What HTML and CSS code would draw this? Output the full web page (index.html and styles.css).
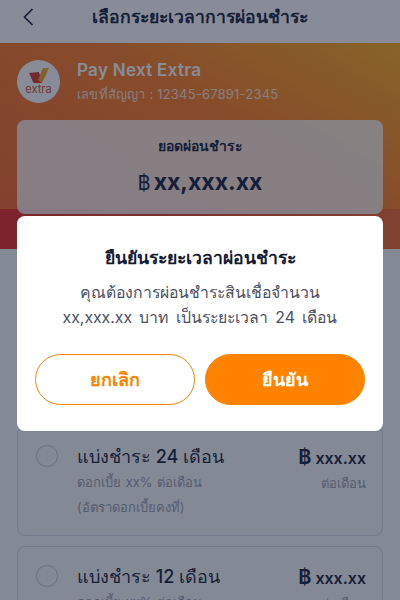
FILE: index.html
```html
<!DOCTYPE html>
<html lang="th">
<head>
<meta charset="utf-8">
<title>เลือกระยะเวลาการผ่อนชำระ</title>
<link rel="stylesheet" href="styles.css">
</head>
<body>
<div class="page">
  <header class="topbar">
    <svg class="back" width="11" height="18" viewBox="0 0 11 18"><path d="M9.5 1 L1.5 9 L9.5 17" fill="none" stroke="#1c2540" stroke-width="1.7"/></svg>
    <h1 class="title">เลือกระยะเวลาการผ่อนชำระ</h1>
  </header>
  <section class="hero">
    <div class="product">
      <div class="logo">
        <svg width="20" height="15" viewBox="0 0 20 15"><path d="M0 5 L10 4 L13 15 L4.500 15 Z" fill="#d8392b"/><path d="M9 12 L14 0 L20 0 L13 15 Z" fill="#f5a623"/></svg>
        <span class="logo-text">extra</span>
      </div>
      <div class="product-info">
        <div class="product-name">Pay Next Extra</div>
        <div class="contract">เลขที่สัญญา : 12345-67891-2345</div>
      </div>
    </div>
    <div class="amount-card">
      <div class="amount-label">ยอดผ่อนชำระ</div>
      <div class="amount"><span class="baht-big">฿</span>xx,xxx.xx</div>
    </div>
  </section>
  <section class="plans">
    <article class="plan">
      <span class="radio"></span>
      <div class="plan-main">
        <div class="plan-title">แบ่งชำระ 24 เดือน</div>
        <div class="plan-sub">ดอกเบี้ย xx% ต่อเดือน</div>
        <div class="plan-sub">(อัตราดอกเบี้ยคงที่)</div>
      </div>
      <div class="plan-side">
        <div class="plan-price"><span class="baht">฿</span>xxx.xx</div>
        <div class="plan-sub">ต่อเดือน</div>
      </div>
    </article>
    <article class="plan">
      <span class="radio"></span>
      <div class="plan-main">
        <div class="plan-title">แบ่งชำระ 12 เดือน</div>
        <div class="plan-sub">ดอกเบี้ย xx% ต่อเดือน</div>
        <div class="plan-sub">(อัตราดอกเบี้ยคงที่)</div>
      </div>
      <div class="plan-side">
        <div class="plan-price"><span class="baht">฿</span>xxx.xx</div>
        <div class="plan-sub">ต่อเดือน</div>
      </div>
    </article>
  </section>
  <div class="overlay">
    <div class="dialog">
      <h2 class="dialog-title">ยืนยันระยะเวลาผ่อนชำระ</h2>
      <p class="dialog-text">คุณต้องการผ่อนชำระสินเชื่อจำนวน<br>xx,xxx.xx บาท เป็นระยะเวลา 24 เดือน</p>
      <div class="actions">
        <button class="btn btn-outline">ยกเลิก</button>
        <button class="btn btn-fill">ยืนยัน</button>
      </div>
    </div>
  </div>
</div>
</body>
</html>
```
FILE: styles.css
```css
* { box-sizing: border-box; }
html, body { margin: 0; padding: 0; }
body { font-family: "Inter", "Noto Sans", "DejaVu Sans", sans-serif; color: #1c2540; }
.page { position: relative; width: 400px; height: 600px; overflow: hidden; background: #f8f9fb; }
.topbar { height: 43px; padding-bottom: 9px; background: #fff; display: flex; align-items: center; justify-content: center; position: relative; }
.back { position: absolute; left: 23px; top: 8px; }
.title { margin: 0; font-size: 17.6px; font-weight: 600; line-height: 34px; }
.hero {
  height: 206px;
  padding: 17px 17px 0;
  background:
    linear-gradient(to right, #e82c24, #f0692e) left bottom / 100% 40px no-repeat,
    linear-gradient(210deg, #ffae1e 0%, #ff7d24 45%, #f56a2c 100%) left top / 100% 166px no-repeat;
}
.product { display: flex; align-items: center; gap: 17px; height: 43px; }
.logo { width: 43px; height: 43px; border-radius: 50%; background: #fff; display: flex; flex-direction: column; align-items: center; justify-content: center; flex: none; }
.logo-text { font-size: 11px; line-height: 11px; font-weight: 400; color: #d8502b; margin-top: 1px; }
.product-name { font-size: 17px; line-height: 23px; font-weight: 600; color: #fff; letter-spacing: .3px; padding-top: 2px; }
.contract { font-size: 13px; line-height: 23px; color: rgba(255,255,255,.8); letter-spacing: .2px; padding-top: 1px; }
.amount-card { margin-top: 17px; height: 94px; border-radius: 8px; background: rgba(255,255,255,.8); text-align: center; padding-top: 15px; }
.amount-label { font-size: 14px; line-height: 22px; font-weight: 600; }
.amount { font-size: 23px; line-height: 34px; font-weight: 700; margin-top: 8px; }
.baht-big { font-weight: 400; font-size: 20px; margin-right: 3px; }
.plans { padding: 0 17px; display: flex; flex-direction: column; gap: 10px; margin-top: 177px; }
.plan { height: 110px; flex: none; display: flex; align-items: flex-start; border: 1px solid #d4d8e2; border-radius: 8px; padding: 17px 16px 0 18px; }
.radio { width: 22px; height: 22px; border: 1px solid #c2c7d2; border-radius: 50%; flex: none; margin-top: 1px; }
.plan-main { flex: 1; margin-left: 19px; }
.plan-title { font-size: 18px; line-height: 26px; font-weight: 500; }
.plan-sub { font-size: 13px; line-height: 25px; color: #9ba0af; word-spacing: 1px; }
.plan-side { text-align: right; }
.plan-price { font-size: 16px; line-height: 26px; font-weight: 600; }
.baht { font-size: 20px; margin-right: 4px; font-weight: 600; }
.overlay { position: absolute; inset: 0; background: rgba(15,25,50,.5); padding: 216px 17px 0; }
.dialog { height: 215px; background: #fff; border-radius: 8px; padding: 24px 18px 0; text-align: center; }
.dialog-title { margin: 0; font-size: 17.6px; line-height: 36px; font-weight: 600; color: #141b33; }
.dialog-text { margin: 0; font-size: 15.8px; line-height: 25px; color: #4a5064; padding-top: 4px; word-spacing: 3px; }
.actions { display: flex; gap: 10px; margin-top: 24px; }
.btn { flex: 1; height: 51px; border-radius: 26px; font: inherit; font-size: 18px; font-weight: 700; border: 1px solid #ff8200; padding: 0; }
.btn-outline { background: #fff; color: #ff8200; }
.btn-fill { background: #ff8200; color: #fff; }
```
